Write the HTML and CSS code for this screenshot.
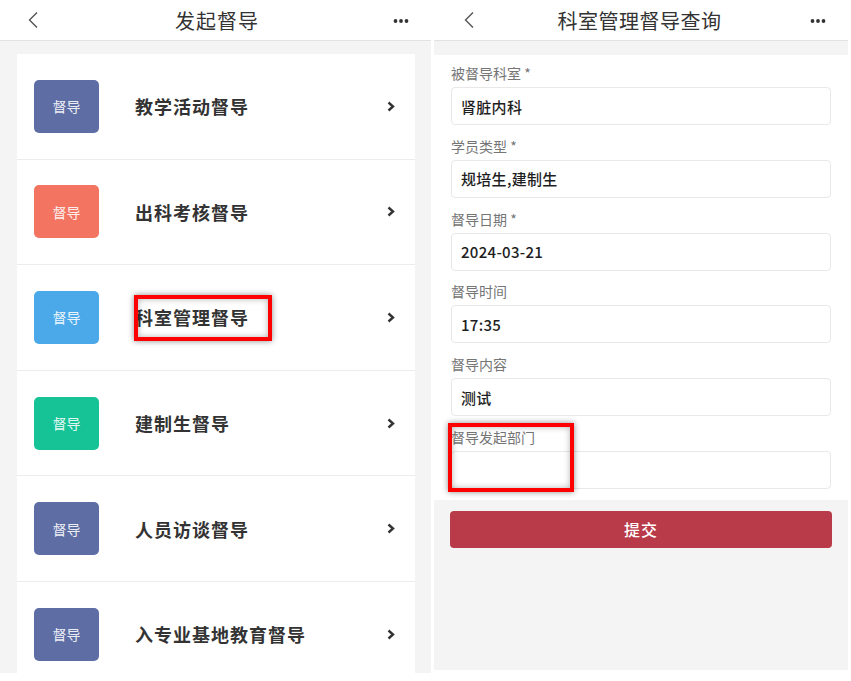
FILE: index.html
```html
<!DOCTYPE html>
<html>
<head>
    <meta charset="utf-8">
    <title>督导</title>
    <link rel="stylesheet" href="styles.css">
</head>
<body>
    <div class="screens">
        <!-- 发起督导 -->
        <div class="phone phone-left">
            <div class="topbar">
                <svg class="back" width="12" height="18" viewBox="0 0 12 18"><polyline points="10,1.5 2.5,9 10,16.5" fill="none" stroke="#555" stroke-width="1.4"/></svg>
                <div class="topbar-title">发起督导</div>
                <svg class="more" width="16" height="4" viewBox="0 0 16 4"><circle cx="2.5" cy="2" r="1.9" fill="#333"/><circle cx="8" cy="2" r="1.9" fill="#333"/><circle cx="13.5" cy="2" r="1.9" fill="#333"/></svg>
            </div>
            <div class="menu-card">
                <div class="menu-row">
                    <div class="badge badge-slate">督导</div>
                    <div class="menu-title">教学活动督导</div>
                    <svg class="arrow" width="10" height="11" viewBox="0 0 10 11"><polyline points="2.5,1.5 7,5.5 2.5,9.5" fill="none" stroke="#333" stroke-width="2.4"/></svg>
                </div>
                <div class="menu-row">
                    <div class="badge badge-coral">督导</div>
                    <div class="menu-title">出科考核督导</div>
                    <svg class="arrow" width="10" height="11" viewBox="0 0 10 11"><polyline points="2.5,1.5 7,5.5 2.5,9.5" fill="none" stroke="#333" stroke-width="2.4"/></svg>
                </div>
                <div class="menu-row">
                    <div class="badge badge-sky">督导</div>
                    <div class="menu-title">科室管理督导</div>
                    <svg class="arrow" width="10" height="11" viewBox="0 0 10 11"><polyline points="2.5,1.5 7,5.5 2.5,9.5" fill="none" stroke="#333" stroke-width="2.4"/></svg>
                </div>
                <div class="menu-row">
                    <div class="badge badge-teal">督导</div>
                    <div class="menu-title">建制生督导</div>
                    <svg class="arrow" width="10" height="11" viewBox="0 0 10 11"><polyline points="2.5,1.5 7,5.5 2.5,9.5" fill="none" stroke="#333" stroke-width="2.4"/></svg>
                </div>
                <div class="menu-row">
                    <div class="badge badge-slate">督导</div>
                    <div class="menu-title">人员访谈督导</div>
                    <svg class="arrow" width="10" height="11" viewBox="0 0 10 11"><polyline points="2.5,1.5 7,5.5 2.5,9.5" fill="none" stroke="#333" stroke-width="2.4"/></svg>
                </div>
                <div class="menu-row">
                    <div class="badge badge-slate">督导</div>
                    <div class="menu-title">入专业基地教育督导</div>
                    <svg class="arrow" width="10" height="11" viewBox="0 0 10 11"><polyline points="2.5,1.5 7,5.5 2.5,9.5" fill="none" stroke="#333" stroke-width="2.4"/></svg>
                </div>
            </div>
            <div class="mark mark-menu"></div>
        </div>

        <!-- 科室管理督导查询 -->
        <div class="phone phone-right">
            <div class="topbar">
                <svg class="back" width="12" height="18" viewBox="0 0 12 18"><polyline points="10,1.5 2.5,9 10,16.5" fill="none" stroke="#555" stroke-width="1.4"/></svg>
                <div class="topbar-title wide">科室管理督导查询</div>
                <svg class="more" width="16" height="4" viewBox="0 0 16 4"><circle cx="2.5" cy="2" r="1.9" fill="#333"/><circle cx="8" cy="2" r="1.9" fill="#333"/><circle cx="13.5" cy="2" r="1.9" fill="#333"/></svg>
            </div>
            <div class="form">
                <div class="field">
                    <div class="field-label">被督导科室 *</div>
                    <div class="field-box">肾脏内科</div>
                </div>
                <div class="field">
                    <div class="field-label">学员类型 *</div>
                    <div class="field-box">规培生,建制生</div>
                </div>
                <div class="field">
                    <div class="field-label">督导日期 *</div>
                    <div class="field-box">2024-03-21</div>
                </div>
                <div class="field">
                    <div class="field-label">督导时间</div>
                    <div class="field-box">17:35</div>
                </div>
                <div class="field">
                    <div class="field-label">督导内容</div>
                    <div class="field-box">测试</div>
                </div>
                <div class="field">
                    <div class="field-label">督导发起部门</div>
                    <div class="field-box"></div>
                </div>
            </div>
            <button class="submit">提交</button>
            <div class="mark mark-field"></div>
        </div>
    </div>
</body>
</html>
```

FILE: styles.css
```css
body {
    margin: 0;
    background: #fff;
    font-family: "Noto Sans CJK SC", "Noto Sans", sans-serif;
    color: #333;
}
.screens {
    display: flex;
    gap: 3px;
    align-items: flex-start;
}
.phone {
    position: relative;
    background: #f4f4f4;
    overflow: hidden;
}
.phone-left {
    width: 431px;
    height: 673px;
}
.phone-right {
    width: 414px;
    height: 670px;
}

/* top navigation bar */
.topbar {
    height: 40px;
    background: #fff;
    border-bottom: 1px solid #e2e2e2;
    display: flex;
    align-items: center;
    justify-content: space-between;
    padding: 0 22px 0 27px;
}
.phone-right .topbar {
    padding: 0 22px 0 29px;
}
.topbar-title {
    font-size: 20px;
    letter-spacing: 1px;
    color: #333;
    margin-left: 2px;
}
.topbar-title.wide {
    letter-spacing: 0.5px;
    margin-left: -6px;
}
.back {
    display: block;
}
.more {
    display: block;
    margin-top: 2px;
}

/* menu list */
.menu-card {
    background: #fff;
    margin: 13px 16px 0 17px;
}
.menu-row {
    display: flex;
    align-items: center;
    height: 105.6px;
    box-sizing: border-box;
    border-bottom: 1px solid #ececec;
    padding: 0 19px 0 17px;
}
.badge {
    width: 65px;
    height: 53px;
    border-radius: 5px;
    display: flex;
    align-items: center;
    justify-content: center;
    color: rgba(255, 255, 255, 0.9);
    font-size: 14px;
    flex-shrink: 0;
}
.badge-slate { background: #5e6ea5; }
.badge-coral { background: #f27461; }
.badge-sky { background: #4ba9ea; }
.badge-teal { background: #16c397; }
.menu-title {
    flex: 1;
    margin-left: 36px;
    font-size: 18px;
    letter-spacing: 1px;
    font-weight: bold;
    color: #333;
}
.arrow {
    display: block;
}

/* form */
.form {
    background: #fff;
    margin-top: 14px;
    padding: 8px 17px 11px;
}
.field {
    margin-bottom: 10.8px;
}
.field:last-child {
    margin-bottom: 0;
}
.field-label {
    font-size: 14px;
    line-height: 20px;
    color: #757575;
    margin-bottom: 4px;
}
.field-box {
    height: 38px;
    box-sizing: border-box;
    border: 1px solid #e8e8e8;
    border-radius: 4px;
    padding: 0 9px;
    display: flex;
    align-items: center;
    font-size: 15px;
    font-weight: 500;
    letter-spacing: 0.3px;
    color: #1e1e1e;
}
.submit {
    display: block;
    width: 382px;
    height: 37px;
    margin: 11px 0 0 16px;
    border: none;
    border-radius: 4px;
    background: #b93a48;
    color: #fff;
    font-family: inherit;
    font-size: 16px;
    font-weight: 500;
    letter-spacing: 1px;
}

/* red annotation boxes */
.mark {
    position: absolute;
    box-sizing: border-box;
    border: 4px solid #ff0000;
    box-shadow: 0 0 6px rgba(0, 0, 0, 0.45), inset 0 0 6px rgba(0, 0, 0, 0.3);
}
.mark-menu {
    left: 134px;
    top: 295px;
    width: 138px;
    height: 46px;
}
.mark-field {
    left: 14px;
    top: 423px;
    width: 126px;
    height: 69px;
}
```
